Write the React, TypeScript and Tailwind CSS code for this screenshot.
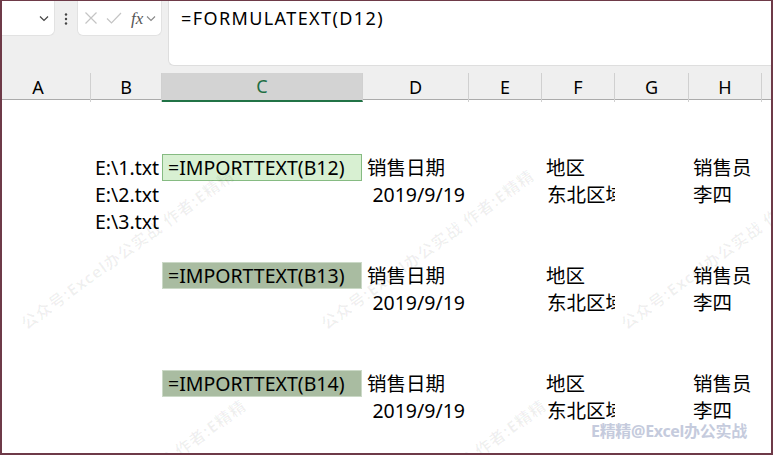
import React from "react";

const FONT = "font-['Noto_Sans','Noto_Sans_CJK_SC',sans-serif]";

type Cell =
  | null
  | { t: string; kind?: "text" | "right" | "clip" | "f1" | "f2" };

const empty: Cell[] = Array(9).fill(null);

function headerRow(): Cell[] {
  return [null, null, null, { t: "销售日期" }, null, { t: "地区" }, null, { t: "销售员" }, null];
}
function dataRow(): Cell[] {
  return [null, null, null, { t: "2019/9/19", kind: "right" }, null, { t: "东北区域", kind: "clip" }, null, { t: "李四" }, null];
}

const rows: Cell[][] = [
  empty,
  empty,
  (() => {
    const r = headerRow();
    r[1] = { t: "E:\\1.txt" };
    r[2] = { t: "=IMPORTTEXT(B12)", kind: "f1" };
    return r;
  })(),
  (() => {
    const r = dataRow();
    r[1] = { t: "E:\\2.txt" };
    return r;
  })(),
  (() => {
    const r = [...empty];
    r[1] = { t: "E:\\3.txt" };
    return r;
  })(),
  empty,
  (() => {
    const r = headerRow();
    r[2] = { t: "=IMPORTTEXT(B13)", kind: "f2" };
    return r;
  })(),
  dataRow(),
  empty,
  empty,
  (() => {
    const r = headerRow();
    r[2] = { t: "=IMPORTTEXT(B14)", kind: "f2" };
    return r;
  })(),
  dataRow(),
  empty,
];

const COLS = ["A", "B", "C", "D", "E", "F", "G", "H", ""];

function CellView({ c }: { c: Cell }) {
  if (!c) return <div />;
  if (c.kind === "f1")
    return (
      <div className="flex items-center border border-[#86bb82] bg-[#d8f0d2] pl-[5px] mr-[1px] whitespace-nowrap overflow-hidden">
        {c.t}
      </div>
    );
  if (c.kind === "f2")
    return (
      <div className="flex items-center border border-[#cbd9c7] bg-[#a9bca1] pl-[5px] mr-[1px] whitespace-nowrap overflow-hidden">
        {c.t}
      </div>
    );
  if (c.kind === "right")
    return <div className="flex items-center justify-end pr-[4px] whitespace-nowrap">{c.t}</div>;
  if (c.kind === "clip")
    return <div className="flex items-center pl-[5px] whitespace-nowrap overflow-hidden">{c.t}</div>;
  return <div className="flex items-center pl-[4px] whitespace-nowrap overflow-hidden">{c.t}</div>;
}

const WM = "公众号:Excel办公实战 作者:E精精";

export default function App() {
  return (
    <div
      className={`${FONT} relative w-[773px] h-[455px] overflow-hidden bg-white border-x-2 border-b-2 border-t border-[#6e3a48] text-black`}
    >
      {/* toolbar */}
      <div className="h-[72px] bg-[#efefef] flex items-start">
        <div className="w-[53px] h-[35px] bg-white rounded-br-[6px] border-r border-b border-[#e2e2e2] flex items-center justify-end pr-[5px]">
          <svg width="10" height="7" viewBox="0 0 10 7" className="mt-[1px]">
            <path d="M1 1.5 L5 5.5 L9 1.5" fill="none" stroke="#444" strokeWidth="1.2" />
          </svg>
        </div>
        <div className="w-[22px] h-[35px] flex items-center justify-center">
          <svg width="4" height="12" viewBox="0 0 4 12">
            <circle cx="2" cy="1.5" r="1.2" fill="#444" />
            <circle cx="2" cy="6" r="1.2" fill="#444" />
            <circle cx="2" cy="10.5" r="1.2" fill="#444" />
          </svg>
        </div>
        <div className="w-[85px] h-[35px] bg-white rounded-b-[6px] border-x border-b border-[#e2e2e2] flex items-center pl-[6px]">
          <svg width="14" height="14" viewBox="0 0 14 14">
            <path d="M1.5 1.5 L12.5 12.5 M12.5 1.5 L1.5 12.5" stroke="#c4c4c4" strokeWidth="1.2" />
          </svg>
          <svg width="16" height="14" viewBox="0 0 16 14" className="ml-[8px]">
            <path d="M1 7.5 L5.5 12 L15 2" fill="none" stroke="#c4c4c4" strokeWidth="1.2" />
          </svg>
          <span className="ml-[9px] font-['Liberation_Serif',serif] italic text-[17px] text-[#555] leading-none">fx</span>
          <svg width="10" height="7" viewBox="0 0 10 7" className="ml-[3px] mt-[1px]">
            <path d="M1 1.5 L5 5.5 L9 1.5" fill="none" stroke="#888" strokeWidth="1.1" />
          </svg>
        </div>
        <div className="ml-[6px] flex-1 h-[65px] bg-white rounded-bl-[6px] border-l border-b border-[#dedede] pl-[12px] pt-[4px]">
          <span className="text-[18px] tracking-[1.4px] leading-[26px]">=FORMULATEXT(D12)</span>
        </div>
      </div>

      {/* column headers */}
      <div className="grid grid-cols-[89px_71px_201px_106px_73px_73px_74px_73px_1fr] h-[27px] bg-[#efefef] border-b border-[#ababab]">
        {COLS.map((c, i) => (
          <div
            key={i}
            className={`flex items-center justify-center text-[18px] ${
              i < 8 ? "border-r border-[#d0d0d0]" : ""
            } ${i === 0 ? "pr-[16px]" : ""} ${
              i === 2 ? "bg-[#d3d3d3] text-[#1f6e43] border-b-2 border-b-[#217346]" : ""
            }`}
          >
            {c}
          </div>
        ))}
      </div>

      {/* sheet body */}
      <div className="grid grid-cols-[89px_71px_201px_106px_73px_73px_74px_73px_1fr] auto-rows-[27px] text-[19.5px] leading-none">
        {rows.map((r, ri) => r.map((c, ci) => <CellView key={`${ri}-${ci}`} c={c} />))}
      </div>

      {/* diagonal watermarks */}
      <div className="pointer-events-none absolute inset-0">
        {[
          "left-[28px] top-[310px]",
          "left-[328px] top-[310px]",
          "left-[628px] top-[310px]",
          "left-[40px] top-[540px]",
          "left-[340px] top-[540px]",
        ].map((pos, i) => (
          <span
            key={i}
            className={`absolute ${pos} origin-bottom-left -rotate-[36deg] whitespace-nowrap text-[16px] font-bold text-[#000]/[0.06] tracking-[1px]`}
          >
            {WM}
          </span>
        ))}
        <span className="absolute left-[589px] top-[418px] whitespace-nowrap text-[16px] font-bold text-[#c5cbdd] tracking-[-0.3px]">
          E精精@Excel办公实战
        </span>
      </div>
    </div>
  );
}
